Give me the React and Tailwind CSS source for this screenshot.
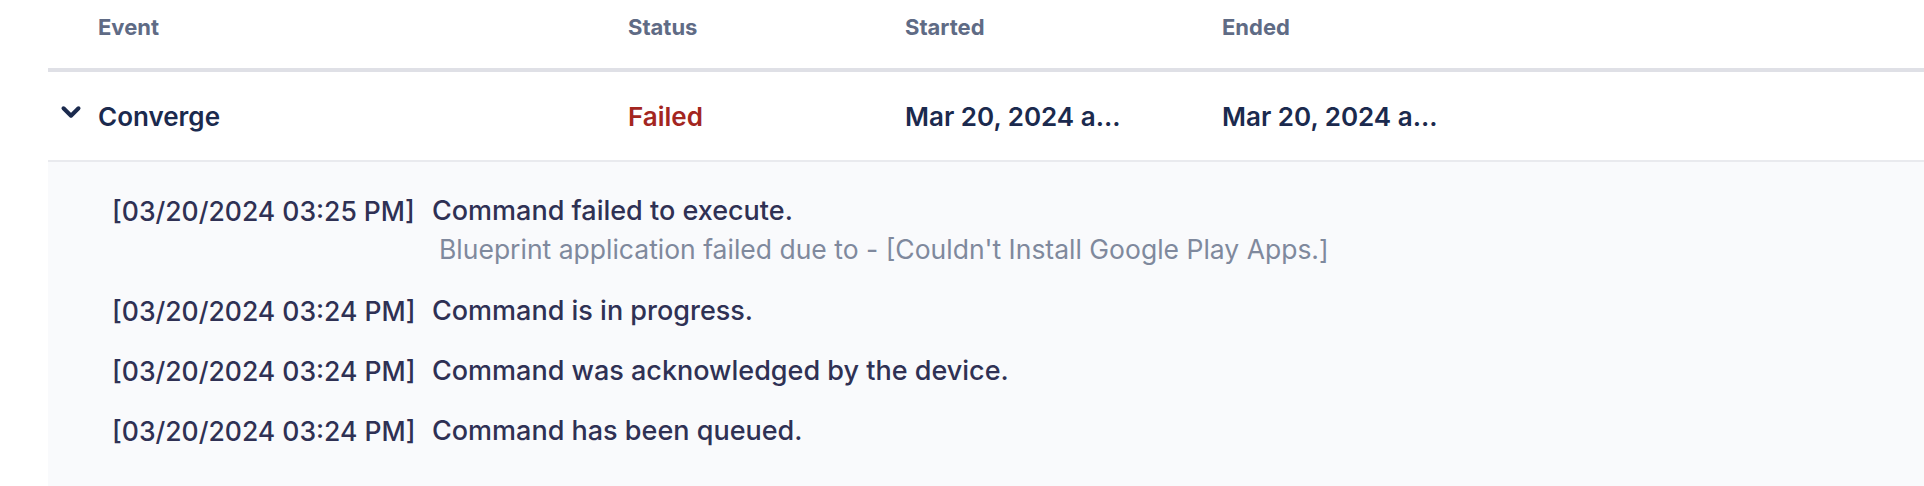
import { ChevronDown } from 'lucide-react'

const logs = [
  {
    time: '[03/20/2024 03:25 PM]',
    message: 'Command failed to execute.',
    detail: "Blueprint application failed due to - [Couldn't Install Google Play Apps.]",
  },
  { time: '[03/20/2024 03:24 PM]', message: 'Command is in progress.' },
  { time: '[03/20/2024 03:24 PM]', message: 'Command was acknowledged by the device.' },
  { time: '[03/20/2024 03:24 PM]', message: 'Command has been queued.' },
]

export default function App() {
  return (
    <div className="min-h-screen bg-white pl-12" style={{ fontFamily: 'Inter, "Noto Sans", sans-serif' }}>
      <div className="flex h-[72px] items-start border-b-4 border-[#dfe0e6] pt-[13px] text-[22px] font-bold leading-[28px] text-[#5f6b85]">
        <div className="w-[50px]" />
        <div className="w-[530px]">Event</div>
        <div className="w-[277px]">Status</div>
        <div className="w-[317px]">Started</div>
        <div>Ended</div>
      </div>

      <div className="flex h-[90px] items-center border-b-2 border-[#e9eaee] text-[26px] font-semibold text-[#1b2a4e]">
        <div className="flex w-[50px] -translate-y-1 justify-end pr-[12px]">
          <ChevronDown className="h-[30px] w-[30px]" strokeWidth={3.2} />
        </div>
        <div className="w-[530px]">Converge</div>
        <div className="w-[277px] text-[#a3261f]">Failed</div>
        <div className="w-[317px]">Mar 20, 2024 a...</div>
        <div>Mar 20, 2024 a...</div>
      </div>

      <div className="flex min-h-[330px] flex-col gap-6 bg-[#f9fafc] pt-[31px] pb-8 pl-16">
        {logs.map((log, i) => (
          <div key={i} className="flex font-medium leading-[36px] text-[#2f3154]">
            <div className="w-[320px] shrink-0 whitespace-nowrap text-[26.5px]">{log.time}</div>
            <div>
              <div className="text-[27px]">{log.message}</div>
              {log.detail && (
                <div className="ml-[7px] text-[26.5px] font-normal leading-[40px] text-[#7f899d]">
                  {log.detail}
                </div>
              )}
            </div>
          </div>
        ))}
      </div>
    </div>
  )
}
